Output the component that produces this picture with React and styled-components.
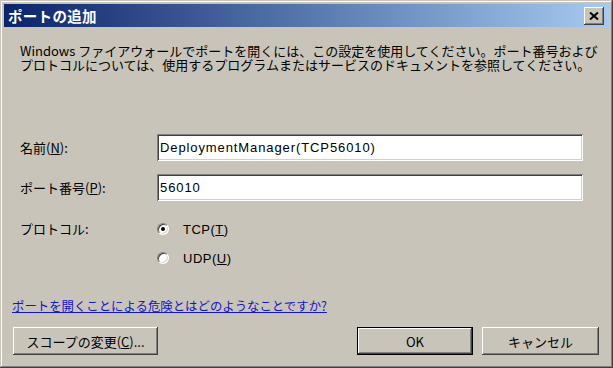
import styled, { createGlobalStyle } from 'styled-components'

const GlobalStyle = createGlobalStyle`
	html, body {
		margin: 0;
		padding: 0;
		background: #ffffff;
	}
`

const FACE = '#c8c4b9'

const Window = styled.div`
	width: 613px;
	height: 368px;
	box-sizing: border-box;
	padding: 4px;
	background: ${FACE};
	box-shadow: inset -1px -1px #404040, inset 1px 1px ${FACE},
		inset -2px -2px #808080, inset 2px 2px #ffffff;
	display: flex;
	flex-direction: column;
	font-family: 'Noto Sans CJK JP', 'Liberation Sans', sans-serif;
	font-size: 13px;
	color: #000;
`
// TITLE BAR
const TitleBar = styled.div`
	height: 23px;
	display: flex;
	align-items: center;
	justify-content: space-between;
	padding: 0 5px 0 4px;
	background: linear-gradient(to right, #0a246a, #a6caf0);
`
const Title = styled.span`
	color: #ffffff;
	font-weight: 700;
	font-size: 14.5px;
	letter-spacing: 0.3px;
`
const CloseButton = styled.div`
	width: 20px;
	height: 18px;
	box-sizing: border-box;
	background: ${FACE};
	box-shadow: inset -1px -1px #404040, inset 1px 1px #ffffff,
		inset -2px -2px #808080;
	display: flex;
	align-items: center;
	justify-content: center;
`

// BODY
const Body = styled.div`
	display: flex;
	flex-direction: column;
	padding: 0 10px 0 8px;
`
const Description = styled.p`
	margin: 17px 0 0 8px;
	font-size: 13px;
`
const Line = styled.span`
	display: block;
	height: 14px;
	line-height: 14px;
	white-space: nowrap;
`
const Form = styled.div`
	display: grid;
	grid-template-columns: 137px 426px;
	row-gap: 13px;
	align-items: center;
	margin: 62px 0 0 8px;
`
const Label = styled.label`
	font-size: 13px;
	align-self: ${(p) => (p.$top ? 'start' : 'center')};
	padding-top: ${(p) => (p.$top ? '5px' : '0')};
`
const U = styled.span`
	text-decoration: underline;
`
const Input = styled.input`
	height: 27px;
	box-sizing: border-box;
	border: none;
	outline: none;
	background: #ffffff;
	padding: 0 3px;
	margin: 0;
	font-family: 'Liberation Sans', 'Noto Sans CJK JP', sans-serif;
	font-size: 13px;
	letter-spacing: 0.9px;
	color: #000;
	box-shadow: inset 1px 1px #808080, inset -1px -1px #ffffff,
		inset 2px 2px #404040, inset -2px -2px #d4d0c8;
`
const RadioGroup = styled.div`
	display: flex;
	flex-direction: column;
	gap: 13px;
	padding-top: 7px;
`
const RadioRow = styled.div`
	height: 16px;
	display: flex;
	align-items: center;
	gap: 14px;
	font-family: 'Liberation Sans', 'Noto Sans CJK JP', sans-serif;
	font-size: 13px;
	letter-spacing: 0.5px;
`
const RadioDot = styled.span`
	width: 12px;
	height: 12px;
	box-sizing: border-box;
	border-radius: 50%;
	background: #ffffff;
	border: 1px solid;
	border-color: #808080 #ffffff #ffffff #808080;
	box-shadow: inset 1px 1px #404040, inset -1px -1px #d4d0c8;
	display: flex;
	align-items: center;
	justify-content: center;
	&::after {
		content: '';
		width: 4px;
		height: 4px;
		border-radius: 50%;
		background: ${(p) => (p.$checked ? '#000' : 'transparent')};
	}
`
const Link = styled.a`
	margin-top: 33px;
	line-height: 14px;
	font-size: 12.4px;
	color: #1414c8;
	text-decoration: underline;
	align-self: flex-start;
`

// FOOTER
const Footer = styled.div`
	display: flex;
	align-items: center;
	margin-top: 14px;
	padding-left: 1px;
`
const Button = styled.button`
	width: ${(p) => p.$w}px;
	height: 28px;
	box-sizing: border-box;
	padding: 0;
	margin: 0 0 0 ${(p) => p.$gap || 0}px;
	border: ${(p) => (p.$default ? '1px solid #000' : 'none')};
	background: ${FACE};
	box-shadow: inset -1px -1px #404040, inset 1px 1px #ffffff,
		inset -2px -2px #808080;
	font-family: 'Noto Sans CJK JP', 'Liberation Sans', sans-serif;
	font-size: 13px;
	color: #000;
`
const Spacer = styled.div`
	flex: 1;
`

const CloseIcon = () => (
	<svg width="10" height="8" viewBox="0 0 10 8">
		<path d="M1 0.5 L9 7.5 M9 0.5 L1 7.5" stroke="#000" strokeWidth="2" />
	</svg>
)

const App = () => {
	return (
		<>
			<GlobalStyle />
			<Window>
				<TitleBar>
					<Title>ポートの追加</Title>
					<CloseButton>
						<CloseIcon />
					</CloseButton>
				</TitleBar>
				<Body>
					<Description>
						<Line>
							Windows ファイアウォールでポートを開くには、この設定を使用してください。ポート番号および
						</Line>
						<Line>
							プロトコルについては、使用するプログラムまたはサービスのドキュメントを参照してください。
						</Line>
					</Description>
					<Form>
						<Label>
							名前(<U>N</U>):
						</Label>
						<Input defaultValue="DeploymentManager(TCP56010)" />
						<Label>
							ポート番号(<U>P</U>):
						</Label>
						<Input defaultValue="56010" />
						<Label $top>プロトコル:</Label>
						<RadioGroup>
							<RadioRow>
								<RadioDot $checked />
								<span>
									TCP(<U>T</U>)
								</span>
							</RadioRow>
							<RadioRow>
								<RadioDot />
								<span>
									UDP(<U>U</U>)
								</span>
							</RadioRow>
						</RadioGroup>
					</Form>
					<Link>ポートを開くことによる危険とはどのようなことですか?</Link>
					<Footer>
						<Button $w={145}>
							スコープの変更(<U>C</U>)...
						</Button>
						<Spacer />
						<Button $w={116} $default>
							OK
						</Button>
						<Button $w={117} $gap={9}>
							キャンセル
						</Button>
					</Footer>
				</Body>
			</Window>
		</>
	)
}

export default App
